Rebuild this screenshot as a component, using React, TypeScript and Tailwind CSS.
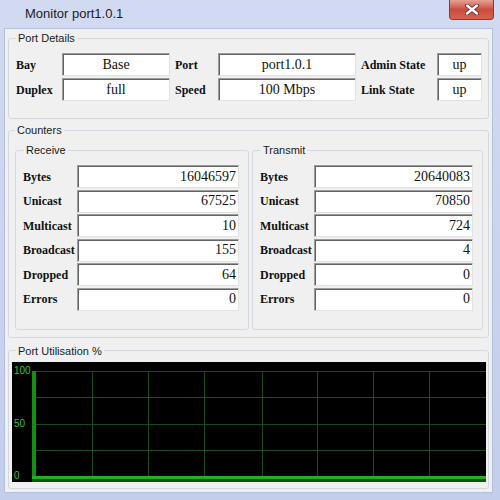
import React from 'react';

type Row = { label: string; value: string };

const receive: Row[] = [
  { label: 'Bytes', value: '16046597' },
  { label: 'Unicast', value: '67525' },
  { label: 'Multicast', value: '10' },
  { label: 'Broadcast', value: '155' },
  { label: 'Dropped', value: '64' },
  { label: 'Errors', value: '0' },
];

const transmit: Row[] = [
  { label: 'Bytes', value: '20640083' },
  { label: 'Unicast', value: '70850' },
  { label: 'Multicast', value: '724' },
  { label: 'Broadcast', value: '4' },
  { label: 'Dropped', value: '0' },
  { label: 'Errors', value: '0' },
];

const serif = "font-['Liberation_Serif','Times_New_Roman',serif]";
const sans = "font-['Liberation_Sans',Arial,sans-serif]";

const Field: React.FC<{ value: string; align?: 'center' | 'right' }> = ({ value, align = 'center' }) => (
  <div
    className={`flex h-[23px] items-center border border-t-[#9c9c9c] border-l-[#9c9c9c] border-b-[#e2e2e2] border-r-[#e2e2e2] bg-white text-[14px] leading-none text-[#111] shadow-[inset_1px_1px_0_#636363] ${serif} ${
      align === 'right' ? 'justify-end pr-[2px]' : 'justify-center'
    }`}
  >
    {value}
  </div>
);

const Label: React.FC<{ text: string; className?: string }> = ({ text, className = '' }) => (
  <div className={`flex h-[23px] items-center text-[12px] font-bold text-[#111] ${serif} ${className}`}>{text}</div>
);

const Group: React.FC<{ title: string; legendMl: string; className?: string; children: React.ReactNode }> = ({
  title,
  legendMl,
  className = '',
  children,
}) => (
  <fieldset className={`rounded-[3px] border border-[#d3d8de] ${className}`}>
    <legend className={`${legendMl} px-[2px] text-[11px] leading-[16px] text-[#1a1a1a] ${sans}`}>{title}</legend>
    {children}
  </fieldset>
);

const CounterBox: React.FC<{ title: string; rows: Row[]; className?: string }> = ({ title, rows, className = '' }) => (
  <Group title={title} legendMl="ml-[8px]" className={className}>
    <div className="grid grid-cols-[54px_1fr] gap-y-[1.6px] pt-[7px] pb-[18px] pl-[7px] pr-[9px]">
      {rows.map((r) => (
        <React.Fragment key={r.label}>
          <Label text={r.label} />
          <Field value={r.value} align="right" />
        </React.Fragment>
      ))}
    </div>
  </Group>
);

const Chart: React.FC = () => {
  const hLines = [9.5, 35.5, 62.5, 88.5];
  const vLines = [80.5, 136.5, 192.5, 250.5, 305.5, 361.5, 417.5];
  return (
    <svg width="474" height="120" viewBox="0 0 474 120" className="block bg-black">
      {hLines.map((y) => (
        <line key={y} x1="24" x2="474" y1={y} y2={y} stroke="#1b4d1b" strokeWidth="1" />
      ))}
      {vLines.map((x) => (
        <line key={x} x1={x} x2={x} y1="9" y2="114" stroke="#1b4d1b" strokeWidth="1" />
      ))}
      <rect x="20" y="9" width="4" height="111" fill="#148f14" />
      <rect x="20" y="114" width="454" height="3" fill="#22b022" />
      <rect x="20" y="117" width="454" height="3" fill="#0c560c" />
      <g fill="#35c435" fontSize="10" fontFamily="Liberation Sans, Arial, sans-serif">
        <text x="2" y="12">100</text>
        <text x="2" y="65">50</text>
        <text x="2" y="117">0</text>
      </g>
    </svg>
  );
};

export default function App() {
  return (
    <div className="relative flex h-[500px] w-[500px] flex-col overflow-hidden bg-gradient-to-b from-[#d2daf1] to-[#c3ceec]">
      <div className={`flex h-[28px] shrink-0 items-center pl-[25px] text-[13px] text-[#1c1c1c] ${sans}`}>
        Monitor port1.0.1
      </div>
      <div className="absolute right-[6px] top-0 flex h-[20px] w-[45px] items-center justify-center rounded-b-[4px] border border-t-0 border-[#8a3a32] bg-gradient-to-b from-[#e6a195] via-[#c94d3f] to-[#d9614b]">
        <svg width="14" height="11" viewBox="0 0 14 11">
          <path d="M2 1.5 L12 9.5 M12 1.5 L2 9.5" stroke="#5a2a25" strokeWidth="4" strokeLinecap="round" />
          <path d="M2 1.5 L12 9.5 M12 1.5 L2 9.5" stroke="#ffffff" strokeWidth="2.4" strokeLinecap="round" />
        </svg>
      </div>

      <div className="mb-[7px] ml-[4px] mr-[7px] flex flex-1 flex-col border border-[#b4bfdd] bg-[#f0f0f0] px-[3px] pt-[1px]">
        <Group title="Port Details" legendMl="ml-[7px]">
          <div className="grid grid-cols-[46px_108px_48px_138px_81px_45px] gap-y-[2px] pb-[17px] pl-[7px] pt-[7px]">
            <Label text="Bay" />
            <Field value="Base" />
            <Label text="Port" className="pl-[5px]" />
            <Field value="port1.0.1" />
            <Label text="Admin State" className="pl-[5px]" />
            <Field value="up" />
            <Label text="Duplex" />
            <Field value="full" />
            <Label text="Speed" className="pl-[5px]" />
            <Field value="100 Mbps" />
            <Label text="Link State" className="pl-[5px]" />
            <Field value="up" />
          </div>
        </Group>

        <Group title="Counters" legendMl="ml-[6px]" className="mt-[3px]">
          <div className="grid grid-cols-[234px_231px] gap-x-[3px] pb-[7px] pl-[6px] pt-[4px]">
            <CounterBox title="Receive" rows={receive} />
            <CounterBox title="Transmit" rows={transmit} />
          </div>
        </Group>

        <Group title="Port Utilisation %" legendMl="ml-[7px]" className="mt-[5px]">
          <div className="pb-[6px] pl-[3px] pt-[3px]">
            <Chart />
          </div>
        </Group>
      </div>
    </div>
  );
}
